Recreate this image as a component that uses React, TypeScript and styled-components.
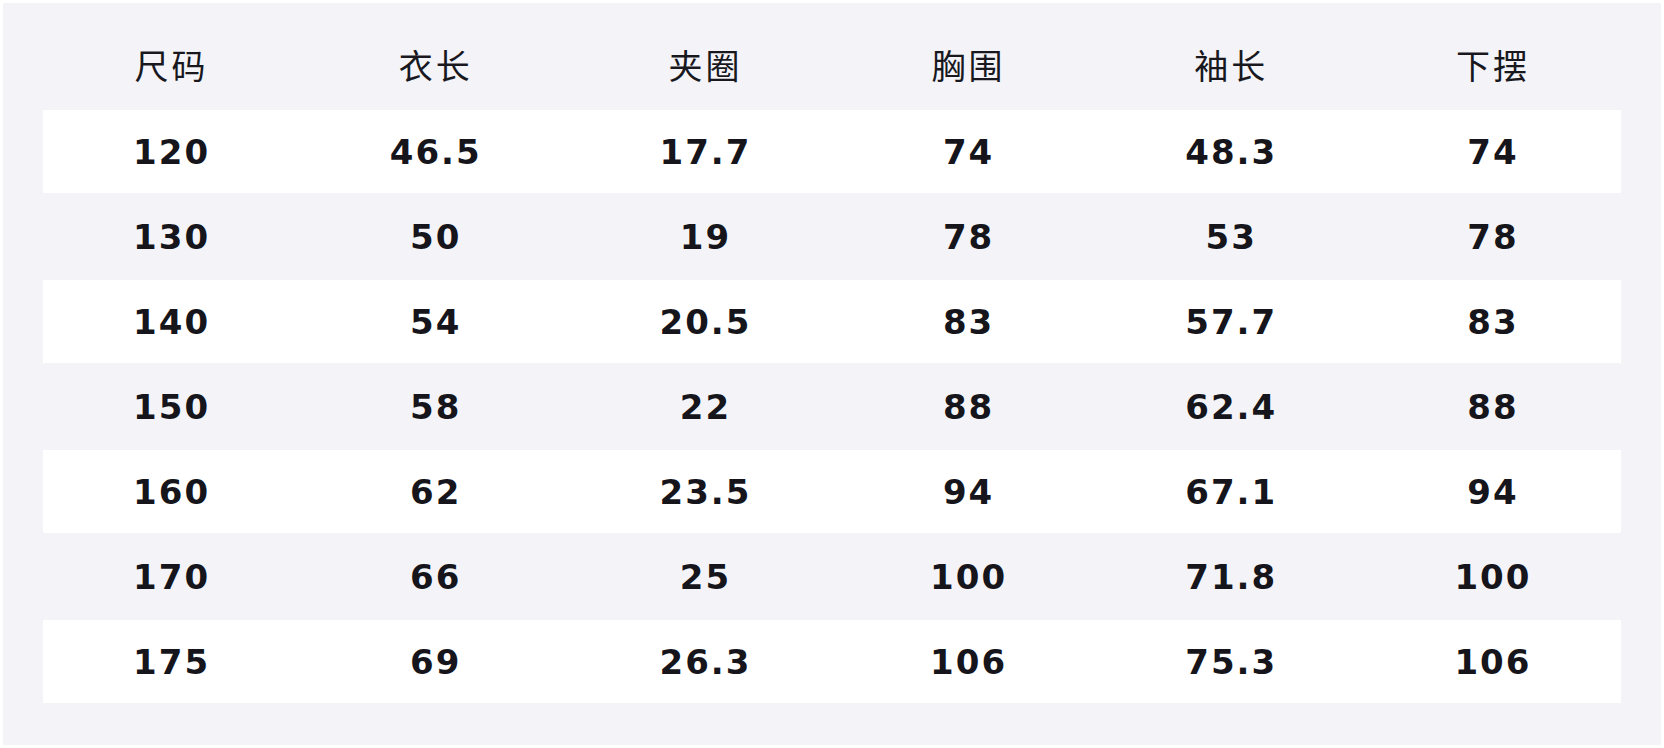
import styled, { createGlobalStyle } from "styled-components";

const GlobalStyle = createGlobalStyle`
  html, body {
    margin: 0;
    padding: 0;
    background: #ffffff;
  }
  body {
    padding: 3px;
  }
`;

const columns = "257fr 271fr 268fr 258fr 267fr 256fr";

const Panel = styled.div`
  background: #f4f4f8;
  padding: 40px;
  height: 742px;
  box-sizing: border-box;
  display: flex;
  flex-direction: column;
  gap: 2px;
`;

const HeadRow = styled.div`
  display: grid;
  grid-template-columns: ${columns};
  height: 65px;
  align-items: center;
  padding-bottom: 21px;
  box-sizing: border-box;
`;

const HeadCell = styled.div`
  text-align: center;
  font-family: "Noto Sans CJK SC", "Noto Sans", sans-serif;
  font-size: 34px;
  letter-spacing: 3px;
  color: #18181e;
  line-height: 1;
`;

const Row = styled.div<{ $striped: boolean }>`
  display: grid;
  grid-template-columns: ${columns};
  height: 83px;
  align-items: center;
  background: ${(p) => (p.$striped ? "#ffffff" : "transparent")};
`;

const Cell = styled.div`
  text-align: center;
  font-family: "DejaVu Sans", sans-serif;
  font-weight: bold;
  font-size: 34px;
  letter-spacing: 2px;
  color: #15151b;
  line-height: 1;
`;

const headers = ["尺码", "衣长", "夹圈", "胸围", "袖长", "下摆"];

const rows = [
  ["120", "46.5", "17.7", "74", "48.3", "74"],
  ["130", "50", "19", "78", "53", "78"],
  ["140", "54", "20.5", "83", "57.7", "83"],
  ["150", "58", "22", "88", "62.4", "88"],
  ["160", "62", "23.5", "94", "67.1", "94"],
  ["170", "66", "25", "100", "71.8", "100"],
  ["175", "69", "26.3", "106", "75.3", "106"],
];

function App() {
  return (
    <>
      <GlobalStyle />
      <Panel>
        <HeadRow>
          {headers.map((h) => (
            <HeadCell key={h}>{h}</HeadCell>
          ))}
        </HeadRow>
        {rows.map((r, i) => (
          <Row key={r[0]} $striped={i % 2 === 0}>
            {r.map((v, j) => (
              <Cell key={j}>{v}</Cell>
            ))}
          </Row>
        ))}
      </Panel>
    </>
  );
}

export default App;
